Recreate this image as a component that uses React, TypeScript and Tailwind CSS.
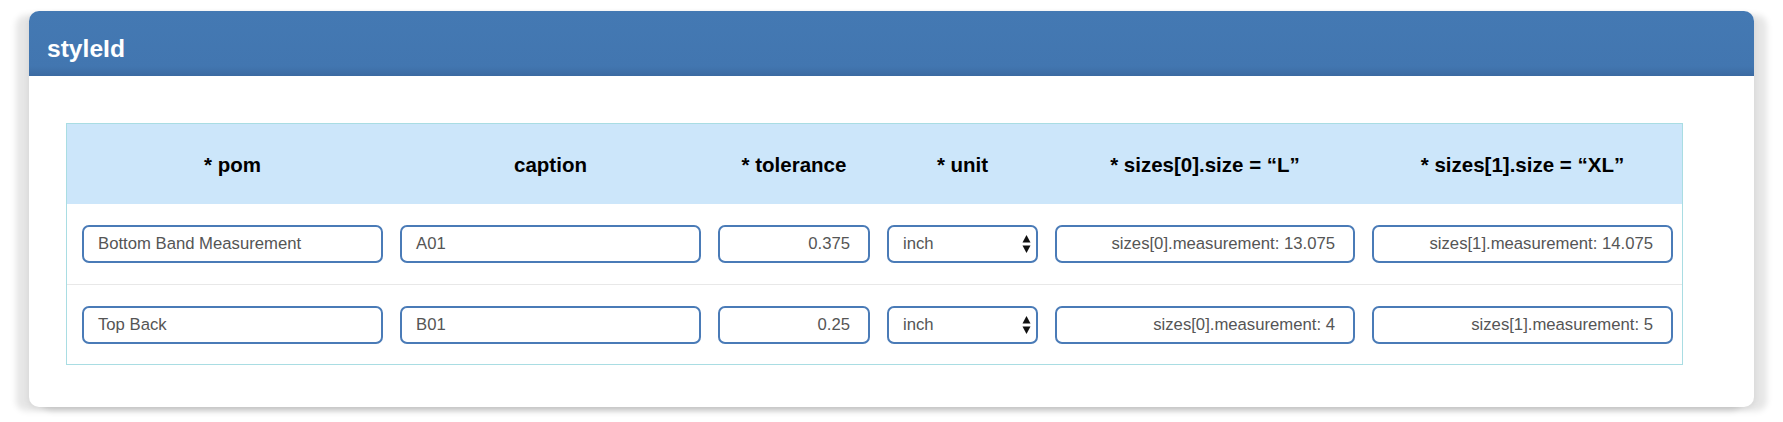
import React from "react";

const cols = "grid grid-cols-[301px_301px_152px_151px_300px_301px] gap-x-[17px] pl-[15px] pr-[8px]";

const headers = ["* pom", "caption", "* tolerance", "* unit", "* sizes[0].size = \u201cL\u201d", "* sizes[1].size = \u201cXL\u201d"];

const rows = [
  { pom: "Bottom Band Measurement", caption: "A01", tol: "0.375", unit: "inch", s0: "sizes[0].measurement: 13.075", s1: "sizes[1].measurement: 14.075" },
  { pom: "Top Back", caption: "B01", tol: "0.25", unit: "inch", s0: "sizes[0].measurement: 4", s1: "sizes[1].measurement: 5" },
];

function Field({ value, right = false }: { value: string; right?: boolean }) {
  return (
    <div
      className={`h-[38px] flex items-center border-2 border-[#4a7bb7] rounded-[7px] bg-white text-[16.7px] text-[#555] ${
        right ? "justify-end pr-[18px]" : "pl-[14px]"
      }`}
    >
      {value}
    </div>
  );
}

function UnitSelect({ value }: { value: string }) {
  return (
    <div className="h-[38px] flex items-center justify-between border-2 border-[#4a7bb7] rounded-[7px] bg-white pl-[14px] pr-[5px] text-[16.7px] text-[#555]">
      <span>{value}</span>
      <svg width="9" height="20" viewBox="0 0 9 20">
        <path d="M4.5 1 L8.5 8.5 L0.5 8.5 Z" fill="#111" />
        <path d="M4.5 19 L8.5 11.5 L0.5 11.5 Z" fill="#111" />
      </svg>
    </div>
  );
}

export default function App() {
  return (
    <div className="min-h-[422px] bg-white pt-[11px] pl-[29px] font-['Liberation_Sans',Arial,sans-serif]">
      <div className="w-[1725px] h-[396px] rounded-[10px] bg-white shadow-[-13px_4px_6px_rgba(0,0,0,0.1),13px_4px_6px_rgba(0,0,0,0.1),0_2px_6px_rgba(0,0,0,0.08)] overflow-hidden">
        {/* HEADER */}
        <div className="h-[65px] bg-[linear-gradient(to_bottom,#4479b3_0%,#4276b0_85%,#3b6aa1_100%)] pl-[18px] pt-[24px]">
          <h1 className="text-white font-bold text-[24.6px] leading-[28px]">styleId</h1>
        </div>

        {/* TABLE */}
        <div className="ml-[37px] mt-[47px] w-[1617px] border border-[#a9dde3]">
          <div className={`${cols} h-[80px] bg-[#cce6fa] items-center`}>
            {headers.map((h) => (
              <div key={h} className="text-center font-bold text-[20.5px] text-black pt-[2px]">
                {h}
              </div>
            ))}
          </div>
          {rows.map((r, i) => (
            <div
              key={r.caption}
              className={`${cols} h-[80px] items-center ${i > 0 ? "border-t border-[#e8e8e8]" : ""}`}
            >
              <Field value={r.pom} />
              <Field value={r.caption} />
              <Field value={r.tol} right />
              <UnitSelect value={r.unit} />
              <Field value={r.s0} right />
              <Field value={r.s1} right />
            </div>
          ))}
        </div>
      </div>
    </div>
  );
}
